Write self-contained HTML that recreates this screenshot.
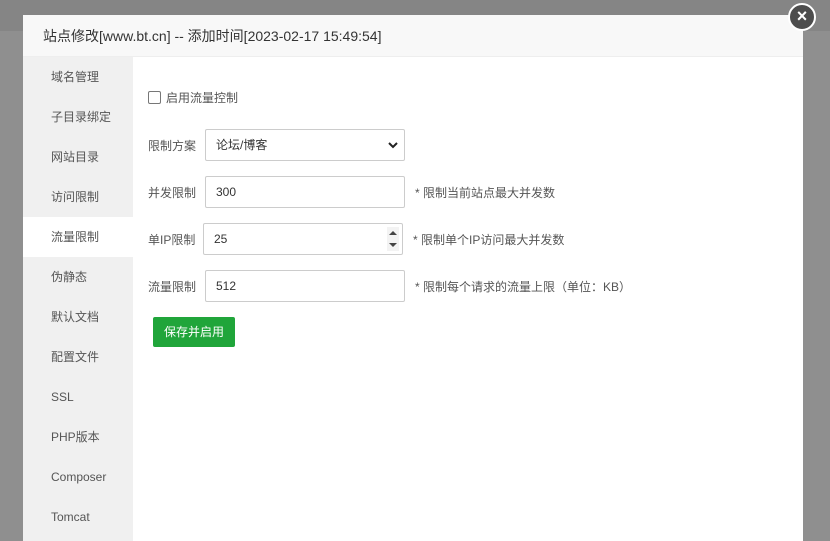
<!DOCTYPE html>
<html><head><meta charset="utf-8"><style>
*{margin:0;padding:0;box-sizing:border-box}
html,body{width:830px;height:541px;overflow:hidden}
body{background:#8f8f8f;font-family:"Liberation Sans","Noto Sans CJK SC",sans-serif;position:relative}
.band{position:absolute;left:0;top:0;width:830px;height:31px;background:#858585}
.dlg{position:absolute;left:23px;top:15px;width:780px;height:526px;background:#fff;overflow:hidden}
.hd{height:42px;background:#f8f8f8;border-bottom:1px solid #eee;font-size:14px;color:#333;line-height:42px;padding-left:20px}
.side{position:absolute;left:0;top:42px;width:110px;height:500px;background:#f0f0f0}
.side div{height:40px;line-height:41px;padding-left:28px;font-size:12px;color:#555}
.side .on{background:#fff}
.main{position:absolute;left:110px;top:42px;right:0;bottom:0;font-size:12px;color:#555}
.cb{position:absolute;left:15px;top:32px;display:flex;align-items:center}
.cb i{width:13px;height:13px;border:1px solid #777;border-radius:2px;margin-right:5px}
.row{position:absolute;left:15px;display:flex;align-items:center}
.row label{width:57px}
.inp{height:32px;border:1px solid #ccc;border-radius:2px;width:200px;padding-left:10px;line-height:30px;color:#333;position:relative}
.tip{margin-left:10px}
.btn{position:absolute;left:20px;top:260px;width:82px;height:30px;background:#20a53a;color:#fff;font-size:12px;line-height:30px;text-align:center;border-radius:2px}
.x{position:absolute;left:788px;top:3px;width:28px;height:28px;border-radius:50%;background:#4d4d4d;border:2px solid #fff;color:#fff;font-size:18px;line-height:22px;text-align:center;font-weight:bold}
</style></head><body>
<div class="band"></div>
<div class="dlg">
<div class="hd">站点修改[www.bt.cn] -- 添加时间[2023-02-17 15:49:54]</div>
<div class="side"><div>域名管理</div><div>子目录绑定</div><div>网站目录</div><div>访问限制</div><div class="on">流量限制</div><div>伪静态</div><div>默认文档</div><div>配置文件</div><div>SSL</div><div>PHP版本</div><div>Composer</div><div>Tomcat</div></div>
<div class="main">
<div class="cb"><i></i>启用流量控制</div>
<div class="row" style="top:72px"><label>限制方案</label><div class="inp">论坛/博客<svg style="position:absolute;right:6px;top:11px" width="10" height="8" viewBox="0 0 10 8"><path d="M1 2l4 4 4-4" stroke="#222" stroke-width="2" fill="none"/></svg></div></div>
<div class="row" style="top:119px"><label>并发限制</label><div class="inp">300</div><span class="tip">* 限制当前站点最大并发数</span></div>
<div class="row" style="top:166px"><label style="width:55px">单IP限制</label><div class="inp">25<svg style="position:absolute;right:3px;top:3px" width="12" height="24" viewBox="0 0 12 24"><rect width="12" height="24" fill="#f3f3f3"/><path d="M2 8l4-4 4 4z M2 16l4 4 4-4z" fill="#444"/></svg></div><span class="tip">* 限制单个IP访问最大并发数</span></div>
<div class="row" style="top:213px"><label>流量限制</label><div class="inp">512</div><span class="tip">* 限制每个请求的流量上限（单位：KB）</span></div>
<div class="btn">保存并启用</div>
</div>
</div>
<div class="x">×</div>
</body></html>
